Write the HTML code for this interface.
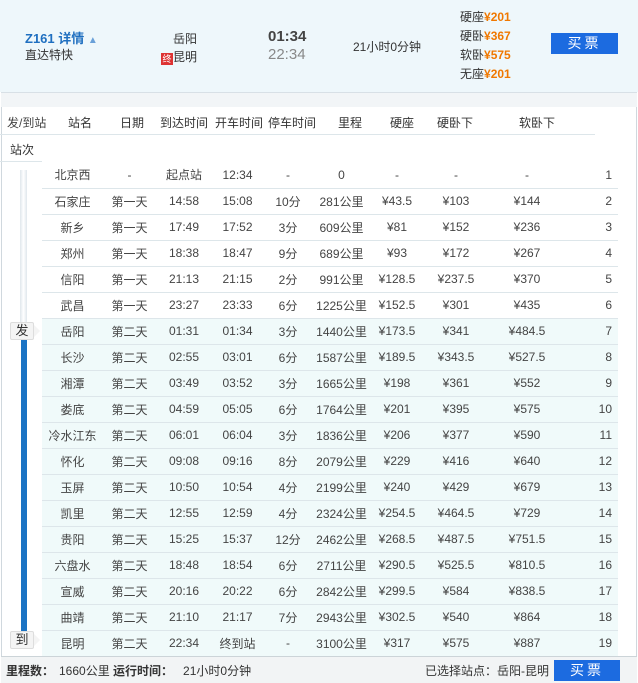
<!DOCTYPE html>
<html><head><meta charset="utf-8"><style>
*{margin:0;padding:0;box-sizing:border-box}
body{width:638px;height:683px;overflow:hidden;background:#fff;font-family:"Liberation Sans","Noto Sans CJK SC",sans-serif;font-size:12px;color:#333;position:relative}
.a{position:absolute;white-space:nowrap}
.hdr{position:absolute;left:0;top:0;width:638px;height:92px;background:#eef7fb}
.gray{position:absolute;left:1px;top:92px;width:636px;height:15px;background:#f2f5f7;border-top:1px solid #d8e0e6}
.box{position:absolute;left:1px;top:92px;width:636px;height:591px;border-left:1px solid #d0d8de;border-right:1px solid #d0d8de}
.o{color:#f07800;font-weight:bold}
table{position:absolute;left:42px;top:162px;border-collapse:collapse;width:576px;table-layout:fixed}
td{height:26px;border-bottom:1px solid #dde6ea;text-align:center;padding:0;white-space:nowrap;color:#444}
tr.s td{background:#f0fafa}
td:last-child{text-align:right;padding-right:6px}
.btn{position:absolute;background:#1c6be0;color:#fff;text-align:center;font-size:14px;letter-spacing:3px}
.foot{position:absolute;left:1px;top:656px;width:636px;height:27px;background:#f2f4f5;border-top:1px solid #ccd4d8}
.mk{position:absolute;left:10px;width:24px;height:18px;background:#f4f4f4;border:1px solid #ddd;border-radius:2px;text-align:center;line-height:16px;font-size:13px}
.mk:after{content:"";position:absolute;right:-7px;top:2px;border-left:6px solid #f4f4f4;border-top:6px solid transparent;border-bottom:6px solid transparent}
</style></head><body>
<div class="hdr"></div>
<div class="a" style="left:25px;top:28px;color:#1f6fc0;font-weight:bold;font-size:13px">Z161 详情 <span style="font-size:10px;color:#6aa0d8">▲</span></div>
<div class="a" style="left:25px;top:46px;font-size:12px">直达特快</div>
<div class="a" style="left:173px;top:30px">岳阳</div>
<div class="a" style="left:161px;top:48px"><span style="display:inline-block;width:12px;height:12px;background:#d33;color:#fff;font-size:9px;line-height:12px;text-align:center;vertical-align:-1px">终</span>昆明</div>
<div class="a" style="left:268px;top:28px;font-size:15px;font-weight:bold;color:#444">01:34</div>
<div class="a" style="left:268px;top:46px;font-size:15px;color:#888">22:34</div>
<div class="a" style="left:353px;top:38px">21小时0分钟</div>
<div class="a" style="left:460px;top:8px;line-height:19px">硬座<span class="o">¥201</span><br>硬卧<span class="o">¥367</span><br>软卧<span class="o">¥575</span><br>无座<span class="o">¥201</span></div>
<div class="btn" style="left:551px;top:33px;width:67px;height:21px;line-height:21px">买票</div>
<div class="box"></div>
<div class="gray"></div>
<div class="a" style="left:0;top:134px;width:595px;border-top:1px solid #dde6ea"></div>
<div class="a" style="left:0;top:161px;width:42px;border-top:1px solid #dde6ea"></div>
<div class="a" style="left:7px;top:114px;color:#444">发/到站</div>
<div class="a" style="left:68px;top:114px">站名</div>
<div class="a" style="left:120px;top:114px">日期</div>
<div class="a" style="left:160px;top:114px">到达时间</div>
<div class="a" style="left:215px;top:114px">开车时间</div>
<div class="a" style="left:268px;top:114px">停车时间</div>
<div class="a" style="left:338px;top:114px">里程</div>
<div class="a" style="left:390px;top:114px">硬座</div>
<div class="a" style="left:437px;top:114px">硬卧下</div>
<div class="a" style="left:519px;top:114px">软卧下</div>
<div class="a" style="left:10px;top:141px">站次</div>
<div class="a" style="left:20px;top:170px;width:7px;height:152px;background:linear-gradient(90deg,#dfe6ec,#fff,#dfe6ec)"></div>
<div class="a" style="left:21px;top:336px;width:6px;height:296px;background:#1a73c4"></div>
<div class="mk" style="top:322px">发</div>
<div class="mk" style="top:631px">到</div>
<table>
<colgroup><col style="width:61px"><col style="width:53px"><col style="width:56px"><col style="width:51px"><col style="width:50px"><col style="width:57px"><col style="width:54px"><col style="width:64px"><col style="width:78px"><col style="width:52px"></colgroup>
<tr><td>北京西</td><td>-</td><td>起点站</td><td>12:34</td><td>-</td><td>0</td><td>-</td><td>-</td><td>-</td><td>1</td></tr>
<tr><td>石家庄</td><td>第一天</td><td>14:58</td><td>15:08</td><td>10分</td><td>281公里</td><td>¥43.5</td><td>¥103</td><td>¥144</td><td>2</td></tr>
<tr><td>新乡</td><td>第一天</td><td>17:49</td><td>17:52</td><td>3分</td><td>609公里</td><td>¥81</td><td>¥152</td><td>¥236</td><td>3</td></tr>
<tr><td>郑州</td><td>第一天</td><td>18:38</td><td>18:47</td><td>9分</td><td>689公里</td><td>¥93</td><td>¥172</td><td>¥267</td><td>4</td></tr>
<tr><td>信阳</td><td>第一天</td><td>21:13</td><td>21:15</td><td>2分</td><td>991公里</td><td>¥128.5</td><td>¥237.5</td><td>¥370</td><td>5</td></tr>
<tr><td>武昌</td><td>第一天</td><td>23:27</td><td>23:33</td><td>6分</td><td>1225公里</td><td>¥152.5</td><td>¥301</td><td>¥435</td><td>6</td></tr>
<tr class="s"><td>岳阳</td><td>第二天</td><td>01:31</td><td>01:34</td><td>3分</td><td>1440公里</td><td>¥173.5</td><td>¥341</td><td>¥484.5</td><td>7</td></tr>
<tr class="s"><td>长沙</td><td>第二天</td><td>02:55</td><td>03:01</td><td>6分</td><td>1587公里</td><td>¥189.5</td><td>¥343.5</td><td>¥527.5</td><td>8</td></tr>
<tr class="s"><td>湘潭</td><td>第二天</td><td>03:49</td><td>03:52</td><td>3分</td><td>1665公里</td><td>¥198</td><td>¥361</td><td>¥552</td><td>9</td></tr>
<tr class="s"><td>娄底</td><td>第二天</td><td>04:59</td><td>05:05</td><td>6分</td><td>1764公里</td><td>¥201</td><td>¥395</td><td>¥575</td><td>10</td></tr>
<tr class="s"><td>冷水江东</td><td>第二天</td><td>06:01</td><td>06:04</td><td>3分</td><td>1836公里</td><td>¥206</td><td>¥377</td><td>¥590</td><td>11</td></tr>
<tr class="s"><td>怀化</td><td>第二天</td><td>09:08</td><td>09:16</td><td>8分</td><td>2079公里</td><td>¥229</td><td>¥416</td><td>¥640</td><td>12</td></tr>
<tr class="s"><td>玉屏</td><td>第二天</td><td>10:50</td><td>10:54</td><td>4分</td><td>2199公里</td><td>¥240</td><td>¥429</td><td>¥679</td><td>13</td></tr>
<tr class="s"><td>凯里</td><td>第二天</td><td>12:55</td><td>12:59</td><td>4分</td><td>2324公里</td><td>¥254.5</td><td>¥464.5</td><td>¥729</td><td>14</td></tr>
<tr class="s"><td>贵阳</td><td>第二天</td><td>15:25</td><td>15:37</td><td>12分</td><td>2462公里</td><td>¥268.5</td><td>¥487.5</td><td>¥751.5</td><td>15</td></tr>
<tr class="s"><td>六盘水</td><td>第二天</td><td>18:48</td><td>18:54</td><td>6分</td><td>2711公里</td><td>¥290.5</td><td>¥525.5</td><td>¥810.5</td><td>16</td></tr>
<tr class="s"><td>宣威</td><td>第二天</td><td>20:16</td><td>20:22</td><td>6分</td><td>2842公里</td><td>¥299.5</td><td>¥584</td><td>¥838.5</td><td>17</td></tr>
<tr class="s"><td>曲靖</td><td>第二天</td><td>21:10</td><td>21:17</td><td>7分</td><td>2943公里</td><td>¥302.5</td><td>¥540</td><td>¥864</td><td>18</td></tr>
<tr class="s"><td>昆明</td><td>第二天</td><td>22:34</td><td>终到站</td><td>-</td><td>3100公里</td><td>¥317</td><td>¥575</td><td>¥887</td><td>19</td></tr>
</table>
<div class="foot"></div>
<div class="a" style="left:6px;top:662px"><b>里程数：</b></div>
<div class="a" style="left:59px;top:662px">1660公里 <b>运行时间：</b>&nbsp;&nbsp; 21小时0分钟</div>
<div class="a" style="left:425px;top:662px">已选择站点：岳阳-昆明</div>
<div class="btn" style="left:554px;top:660px;width:66px;height:21px;line-height:21px">买票</div>
</body></html>
